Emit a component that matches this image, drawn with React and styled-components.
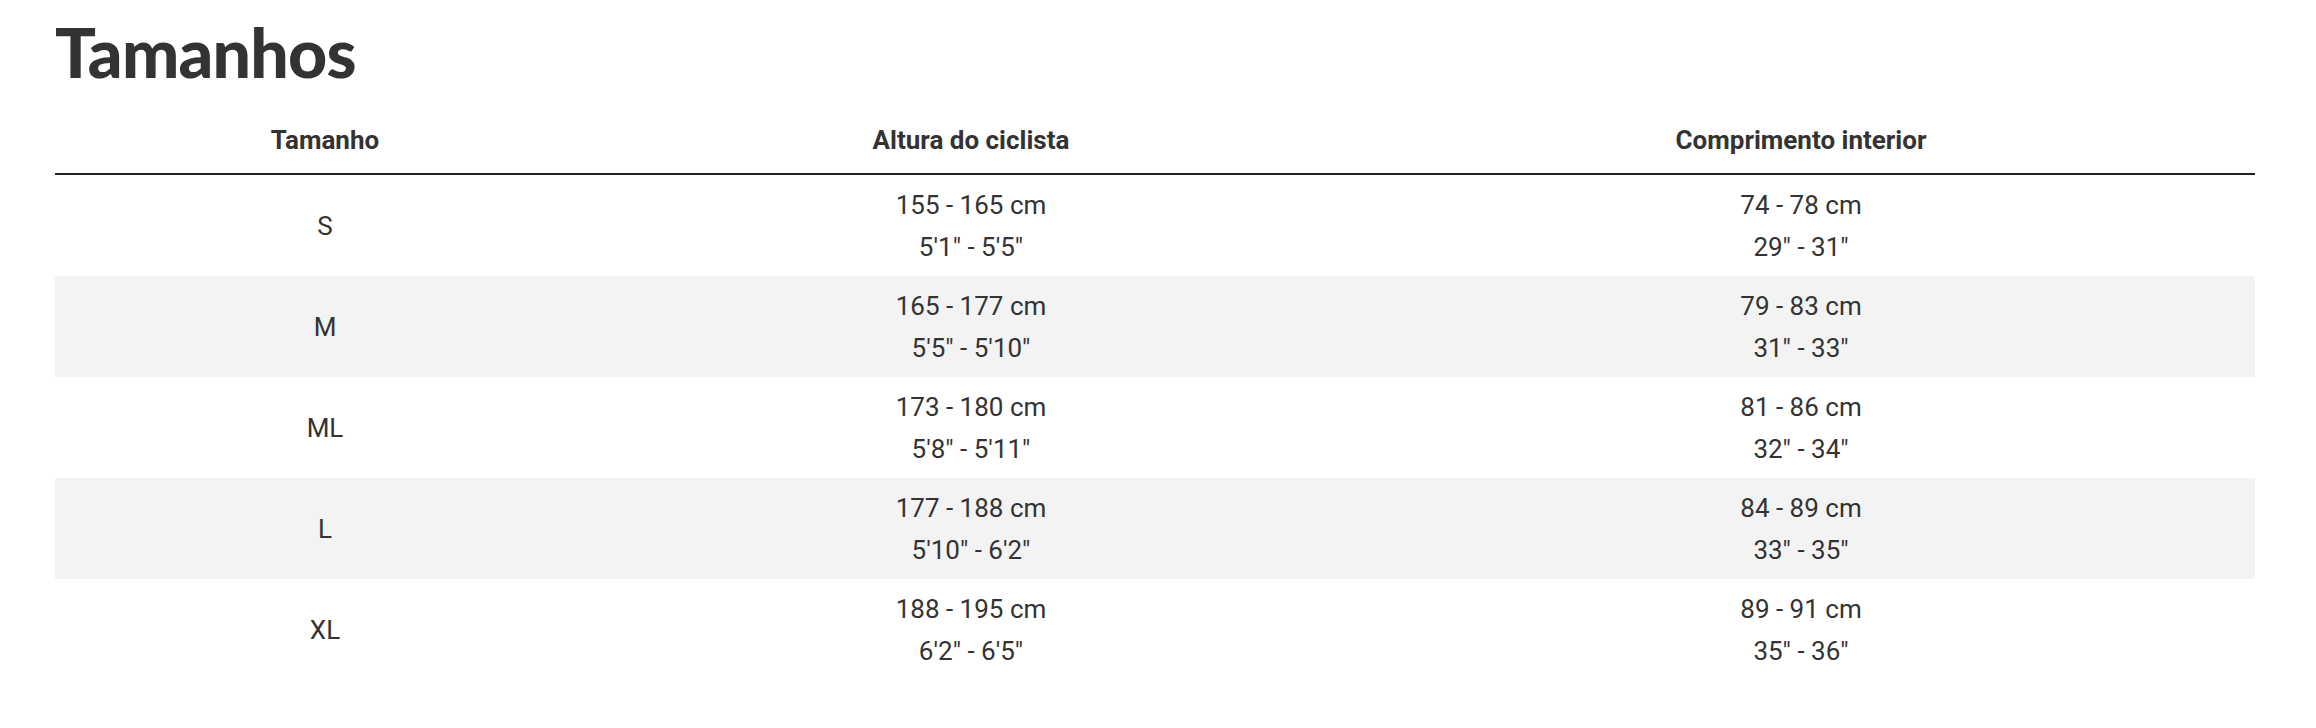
import styled, { createGlobalStyle } from 'styled-components';

const GlobalStyle = createGlobalStyle`
    body {
        margin: 0;
        background: #fff;
        font-family: Roboto, "Liberation Sans", sans-serif;
        color: #333;
    }
`

const sizes = [
    { size: "S", height: ["155 - 165 cm", "5'1\" - 5'5\""], inseam: ["74 - 78 cm", "29\" - 31\""] },
    { size: "M", height: ["165 - 177 cm", "5'5\" - 5'10\""], inseam: ["79 - 83 cm", "31\" - 33\""] },
    { size: "ML", height: ["173 - 180 cm", "5'8\" - 5'11\""], inseam: ["81 - 86 cm", "32\" - 34\""] },
    { size: "L", height: ["177 - 188 cm", "5'10\" - 6'2\""], inseam: ["84 - 89 cm", "33\" - 35\""] },
    { size: "XL", height: ["188 - 195 cm", "6'2\" - 6'5\""], inseam: ["89 - 91 cm", "35\" - 36\""] },
]

const App = () => {
    return (
        <Page>
            <GlobalStyle />
            <Title>Tamanhos</Title>
            <Table>
                <thead>
                    <tr>
                        <Head $width={540}>Tamanho</Head>
                        <Head $width={752}>Altura do ciclista</Head>
                        <Head>Comprimento interior</Head>
                    </tr>
                </thead>
                <tbody>
                    {sizes.map((row) => (
                        <Row key={row.size}>
                            <Cell>{row.size}</Cell>
                            <Cell>
                                <Line>{row.height[0]}</Line>
                                <Line>{row.height[1]}</Line>
                            </Cell>
                            <Cell>
                                <Line>{row.inseam[0]}</Line>
                                <Line>{row.inseam[1]}</Line>
                            </Cell>
                        </Row>
                    ))}
                </tbody>
            </Table>
        </Page>
    )
}

const Page = styled.div`
    padding: 16px 61px 40px 55px;
`
const Title = styled.h2`
    margin: 0;
    padding-top: 2px;
    font-family: Lato, "DejaVu Sans", sans-serif;
    font-weight: 900;
    font-size: 68px;
    line-height: 68px;
    color: #333;
    letter-spacing: -0.8px;
`
const Table = styled.table`
    width: 2200px;
    border-collapse: collapse;
    table-layout: fixed;
`
const Head = styled.th`
    width: ${(p) => (p.$width ? `${p.$width}px` : "auto")};
    padding: 40px 0 19px;
    font-size: 26px;
    line-height: 28px;
    font-weight: 700;
    color: #333;
    text-align: center;
    border-bottom: 2px solid #222;
`
const Row = styled.tr`
    &:nth-child(even) {
        background: #f3f3f3;
    }
`
const Cell = styled.td`
    height: 101px;
    padding: 0;
    text-align: center;
    vertical-align: middle;
    font-size: 26px;
    line-height: 42px;
    color: #333;
`
const Line = styled.div``

export default App;
